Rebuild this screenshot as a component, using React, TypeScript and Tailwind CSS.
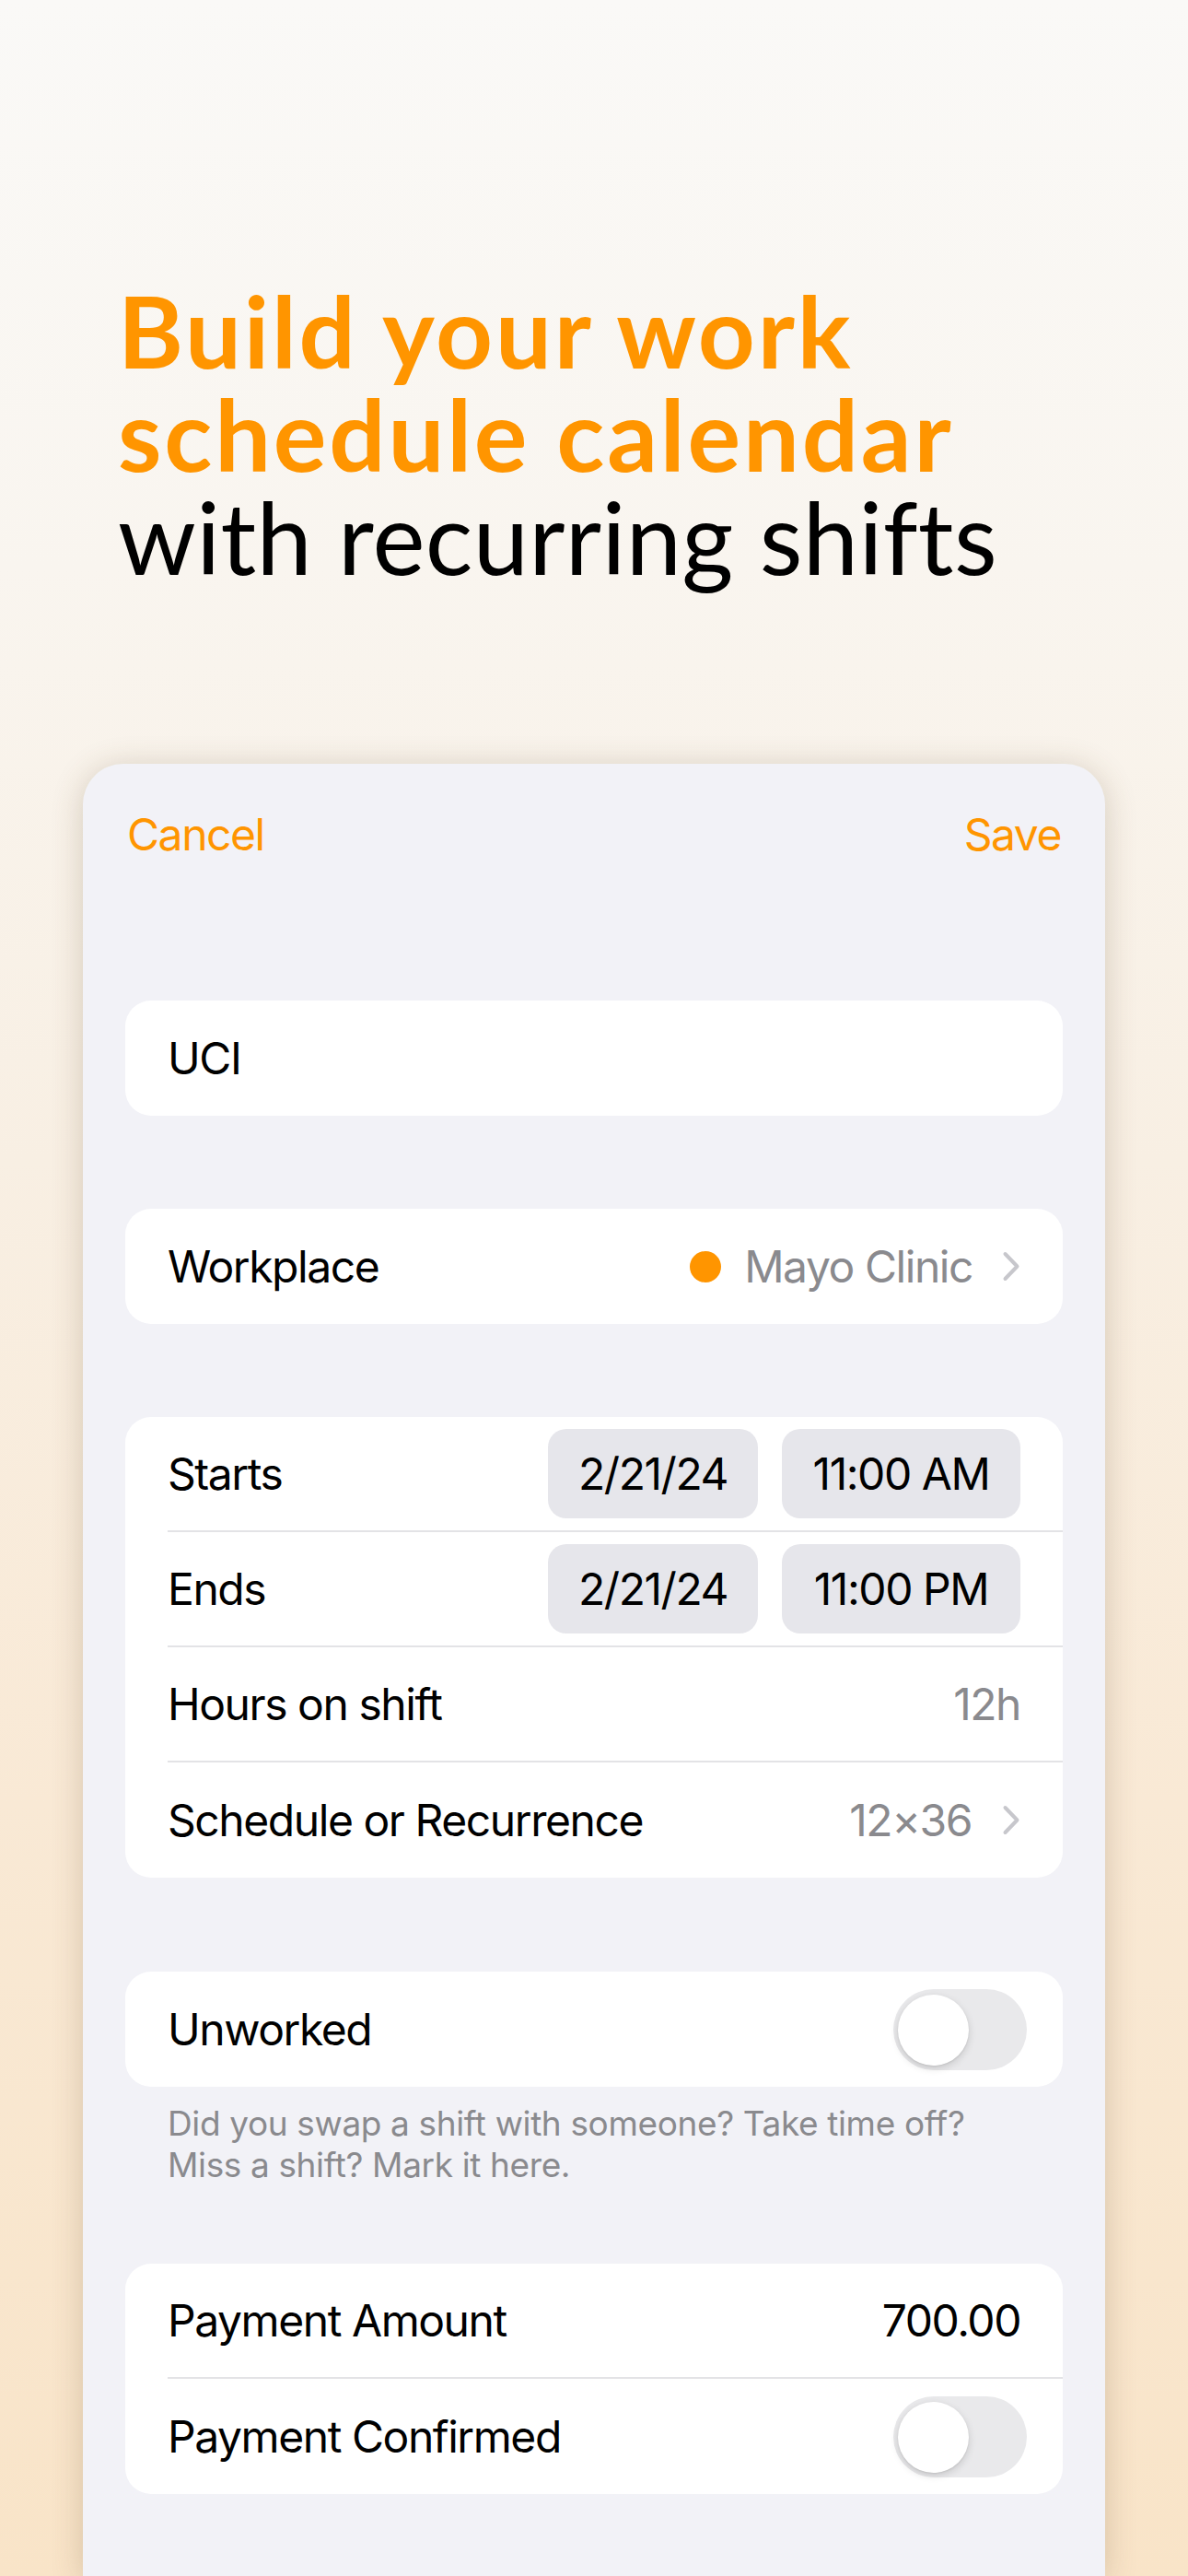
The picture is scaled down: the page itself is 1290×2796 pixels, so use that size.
import { ReactNode } from "react"

const ORANGE = "text-[#ff9500]"

const Chevron = () => (
  <svg width="20" height="33" viewBox="0 0 20 33" fill="none" className="shrink-0">
    <path d="M3.5 3 L16.5 16.5 L3.5 30" stroke="#c7c7cc" strokeWidth="4" strokeLinecap="round" strokeLinejoin="round" />
  </svg>
)

const Toggle = () => (
  <div className="relative h-[88px] w-[145px] shrink-0 rounded-full bg-[#e9e9eb]">
    <div className="absolute left-[5px] top-[6px] h-[77px] w-[77px] rounded-full bg-white shadow-[0_3px_8px_rgba(0,0,0,0.15),0_1px_2px_rgba(0,0,0,0.08)]" />
  </div>
)

const Pill = ({ children, width }: { children: ReactNode; width: string }) => (
  <div className={`flex h-[97px] items-center justify-center rounded-[20px] bg-[#e6e6eb] ${width}`}>
    {children}
  </div>
)

// one line of a grouped list; the separator starts at the text, like iOS
const Row = ({ children, last = false, toggle = false }: { children: ReactNode; last?: boolean; toggle?: boolean }) => (
  <div className="pl-[46px]">
    <div
      className={`flex h-[125px] items-center justify-between ${toggle ? "pr-[39px]" : "pr-[46px]"} ${
        last ? "" : "border-b-[2px] border-[#e3e3e6]"
      }`}
    >
      {children}
    </div>
  </div>
)

const Group = ({ children, className = "" }: { children: ReactNode; className?: string }) => (
  <div className={`overflow-hidden rounded-[28px] bg-white ${className}`}>{children}</div>
)

export default function App() {
  return (
    <div
      className="flex h-[2796px] w-[1290px] flex-col overflow-hidden bg-[linear-gradient(180deg,#faf9f7_0%,#f9f5ef_22%,#f8efe3_45%,#f9e9d5_70%,#f9e4c8_100%)]"
      style={{ fontFamily: "Inter, 'Liberation Sans', sans-serif" }}
    >
      {/* headline */}
      <div
        className="pl-[128px] pt-[302px] text-[108px] leading-[112px]"
        style={{ fontFamily: "Lato, 'Noto Sans', sans-serif" }}
      >
        <div className={`font-bold tracking-[0.026em] ${ORANGE}`}>Build your work</div>
        <div className={`font-bold tracking-[0.026em] ${ORANGE}`}>schedule calendar</div>
        <div className="font-normal tracking-[0.003em] text-black">with recurring shifts</div>
      </div>

      {/* phone sheet */}
      <div className="mx-[90px] mt-[191px] flex-1 rounded-t-[44px] bg-[#f2f2f7] px-[46px] text-[48px] tracking-[-0.03em] text-black shadow-[0_4px_34px_rgba(100,75,40,0.24)]">
        <div className="flex h-[154px] items-center justify-between px-[2px] text-[#ff9500]">
          <span>Cancel</span>
          <span>Save</span>
        </div>

        <Group className="mt-[103px]">
          <Row last>
            <span>UCI</span>
          </Row>
        </Group>

        <Group className="mt-[101px]">
          <Row last>
            <span>Workplace</span>
            <div className="flex items-center">
              <div className="h-[34px] w-[34px] rounded-full bg-[#ff9500]" />
              <span className="ml-[25px] text-[#8a8a8e]">Mayo Clinic</span>
              <span className="ml-[32px]">
                <Chevron />
              </span>
            </div>
          </Row>
        </Group>

        <Group className="mt-[101px]">
          <Row>
            <span>Starts</span>
            <div className="flex gap-[26px]">
              <Pill width="w-[228px]">2/21/24</Pill>
              <Pill width="w-[259px]">11:00 AM</Pill>
            </div>
          </Row>
          <Row>
            <span>Ends</span>
            <div className="flex gap-[26px]">
              <Pill width="w-[228px]">2/21/24</Pill>
              <Pill width="w-[259px]">11:00 PM</Pill>
            </div>
          </Row>
          <Row>
            <span>Hours on shift</span>
            <span className="text-[#8a8a8e]">12h</span>
          </Row>
          <Row last>
            <span>Schedule or Recurrence</span>
            <div className="flex items-center">
              <span className="text-[#8a8a8e]">12×36</span>
              <span className="ml-[33px]">
                <Chevron />
              </span>
            </div>
          </Row>
        </Group>

        <Group className="mt-[102px]">
          <Row last toggle>
            <span>Unworked</span>
            <Toggle />
          </Row>
        </Group>
        <p className="px-[46px] pt-[17px] text-[37px] leading-[45px] tracking-[-0.01em] text-[#8a8a8e]">
          Did you swap a shift with someone? Take time off?
          <br />
          Miss a shift? Mark it here.
        </p>

        <Group className="mt-[85px]">
          <Row>
            <span>Payment Amount</span>
            <span>700.00</span>
          </Row>
          <Row last toggle>
            <span>Payment Confirmed</span>
            <Toggle />
          </Row>
        </Group>
      </div>
    </div>
  )
}
